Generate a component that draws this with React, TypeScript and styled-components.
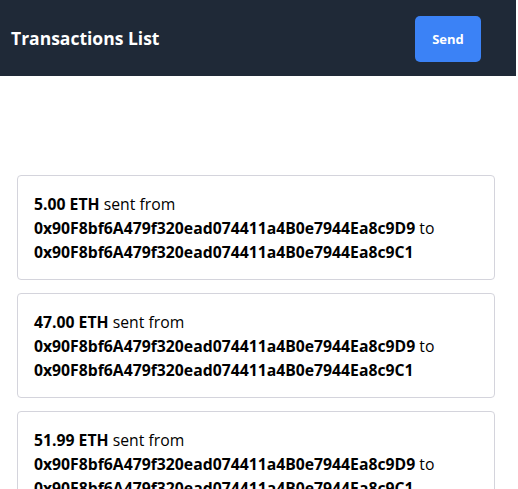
import { createGlobalStyle, styled } from 'styled-components'

const GlobalStyle = createGlobalStyle`
    html, body {
        margin: 0;
        padding: 0;
        background: #ffffff;
        font-family: "Open Sans", "Noto Sans", sans-serif;
        color: #000000;
    }
`

const Header = styled.header`
    height: 76px;
    width: 516px;
    box-sizing: border-box;
    padding: 0 35px 0 11px;
    background: #1f2937;
    display: flex;
    align-items: center;
    justify-content: space-between;
`

const Title = styled.h1`
    margin: 0;
    color: #ffffff;
    font-size: 17.5px;
    font-weight: 700;
`

const SendButton = styled.button`
    width: 66px;
    height: 46px;
    margin-top: 1px;
    border: none;
    border-radius: 5px;
    background: #3b82f6;
    color: #ffffff;
    font-family: inherit;
    font-size: 13px;
    font-weight: 700;
    cursor: pointer;
`

const List = styled.main`
    padding: 99px 0 0 17px;
    width: 478px;
    display: flex;
    flex-direction: column;
    gap: 13px;
`

const Card = styled.div`
    border: 1px solid #d4d4dc;
    border-radius: 4px;
    padding: 16px 16px 15px;
    font-size: 15.75px;
    line-height: 24px;
`

const Strong = styled.b`
    font-weight: 700;
`

type Tx = { amount: string; from: string; to: string }

const txs: Tx[] = [
    {
        amount: '5.00',
        from: '0x90F8bf6A479f320ead074411a4B0e7944Ea8c9D9',
        to: '0x90F8bf6A479f320ead074411a4B0e7944Ea8c9C1',
    },
    {
        amount: '47.00',
        from: '0x90F8bf6A479f320ead074411a4B0e7944Ea8c9D9',
        to: '0x90F8bf6A479f320ead074411a4B0e7944Ea8c9C1',
    },
    {
        amount: '51.99',
        from: '0x90F8bf6A479f320ead074411a4B0e7944Ea8c9D9',
        to: '0x90F8bf6A479f320ead074411a4B0e7944Ea8c9C1',
    },
]

export default function App() {
    return (
        <>
            <GlobalStyle />
            <Header>
                <Title>Transactions List</Title>
                <SendButton>Send</SendButton>
            </Header>
            <List>
                {txs.map((tx, i) => (
                    <Card key={i}>
                        <Strong>{tx.amount} ETH</Strong> sent from
                        <br />
                        <Strong>{tx.from}</Strong> to
                        <br />
                        <Strong>{tx.to}</Strong>
                    </Card>
                ))}
            </List>
        </>
    )
}
